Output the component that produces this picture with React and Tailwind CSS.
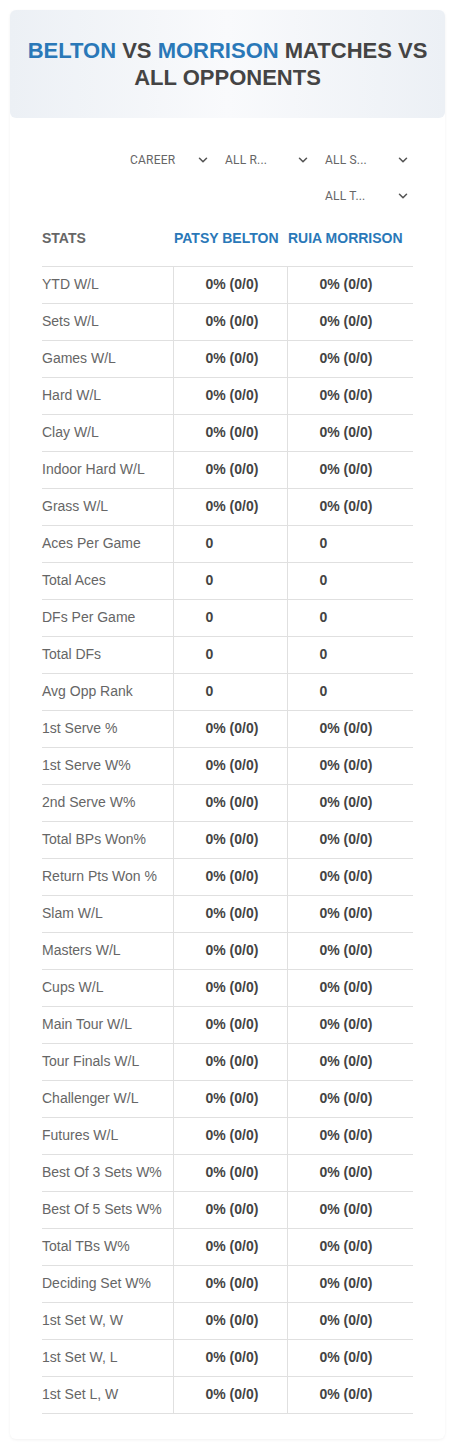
import { ChevronDown } from "lucide-react";

const ROWS = [
  ["YTD W/L", "0% (0/0)"],
  ["Sets W/L", "0% (0/0)"],
  ["Games W/L", "0% (0/0)"],
  ["Hard W/L", "0% (0/0)"],
  ["Clay W/L", "0% (0/0)"],
  ["Indoor Hard W/L", "0% (0/0)"],
  ["Grass W/L", "0% (0/0)"],
  ["Aces Per Game", "0"],
  ["Total Aces", "0"],
  ["DFs Per Game", "0"],
  ["Total DFs", "0"],
  ["Avg Opp Rank", "0"],
  ["1st Serve %", "0% (0/0)"],
  ["1st Serve W%", "0% (0/0)"],
  ["2nd Serve W%", "0% (0/0)"],
  ["Total BPs Won%", "0% (0/0)"],
  ["Return Pts Won %", "0% (0/0)"],
  ["Slam W/L", "0% (0/0)"],
  ["Masters W/L", "0% (0/0)"],
  ["Cups W/L", "0% (0/0)"],
  ["Main Tour W/L", "0% (0/0)"],
  ["Tour Finals W/L", "0% (0/0)"],
  ["Challenger W/L", "0% (0/0)"],
  ["Futures W/L", "0% (0/0)"],
  ["Best Of 3 Sets W%", "0% (0/0)"],
  ["Best Of 5 Sets W%", "0% (0/0)"],
  ["Total TBs W%", "0% (0/0)"],
  ["Deciding Set W%", "0% (0/0)"],
  ["1st Set W, W", "0% (0/0)"],
  ["1st Set W, L", "0% (0/0)"],
  ["1st Set L, W", "0% (0/0)"],
];

function Filter({ label, className }) {
  return (
    <div className={`flex items-center justify-between pr-[3px] h-[36px] ${className}`}>
      <span className="text-[12px] text-[#666] tracking-[0.2px]">{label}</span>
      <ChevronDown size={14} strokeWidth={2.6} className="text-[#555]" />
    </div>
  );
}

export default function App() {
  return (
    <div className="min-h-[1448px] bg-white pt-[10px] px-[10px] font-['Liberation_Sans',Arial,sans-serif]">
      <div className="rounded-[6px] shadow-[0_1px_3px_rgba(0,0,0,0.06)] pb-[25px]">
        <div className="rounded-[6px] bg-gradient-to-r from-[#ecf0f5] via-[#f9fafc] to-[#ecf0f5] h-[108px] flex items-center justify-center px-[16px]">
          <h1 className="text-center text-[22px] leading-[27px] font-bold uppercase text-[#444]">
            <span className="text-[#2a78b8]">Belton</span> vs{" "}
            <span className="text-[#2a78b8]">Morrison</span> matches vs all opponents
          </h1>
        </div>

        <div className="mx-[32px] mt-[24px] flex flex-wrap justify-end font-['Roboto',sans-serif]">
          <Filter label="CAREER" className="w-[90px] pl-[7px]" />
          <Filter label="ALL R..." className="w-[100px] pl-[12px]" />
          <Filter label="ALL S..." className="w-[100px] pl-[12px]" />
          <Filter label="ALL T..." className="w-[100px] pl-[12px]" />
        </div>

        <table className="mx-[32px] mt-[5px] w-[371px] border-collapse text-[14px]">
          <thead>
            <tr className="h-[47px] border-b border-[#e0e0e0] text-[14px] font-bold uppercase text-left align-top">
              <th className="w-[131px] text-[#666] font-bold pt-[9px]">Stats</th>
              <th className="w-[114px] pl-[1px] text-[#2a78b8] font-bold pt-[9px]">Patsy Belton</th>
              <th className="pl-[1px] text-[#2a78b8] font-bold pt-[9px]">Ruia Morrison</th>
            </tr>
          </thead>
          <tbody>
            {ROWS.map(([label, val]) => (
              <tr key={label} className="h-[37px] border-b border-[#e0e0e0]">
                <td className="text-[#666]">{label}</td>
                <td className="border-l border-[#e0e0e0] pl-[32px] font-bold text-[#444]">{val}</td>
                <td className="border-l border-[#e0e0e0] pl-[32px] font-bold text-[#444]">{val}</td>
              </tr>
            ))}
          </tbody>
        </table>
      </div>
    </div>
  );
}
